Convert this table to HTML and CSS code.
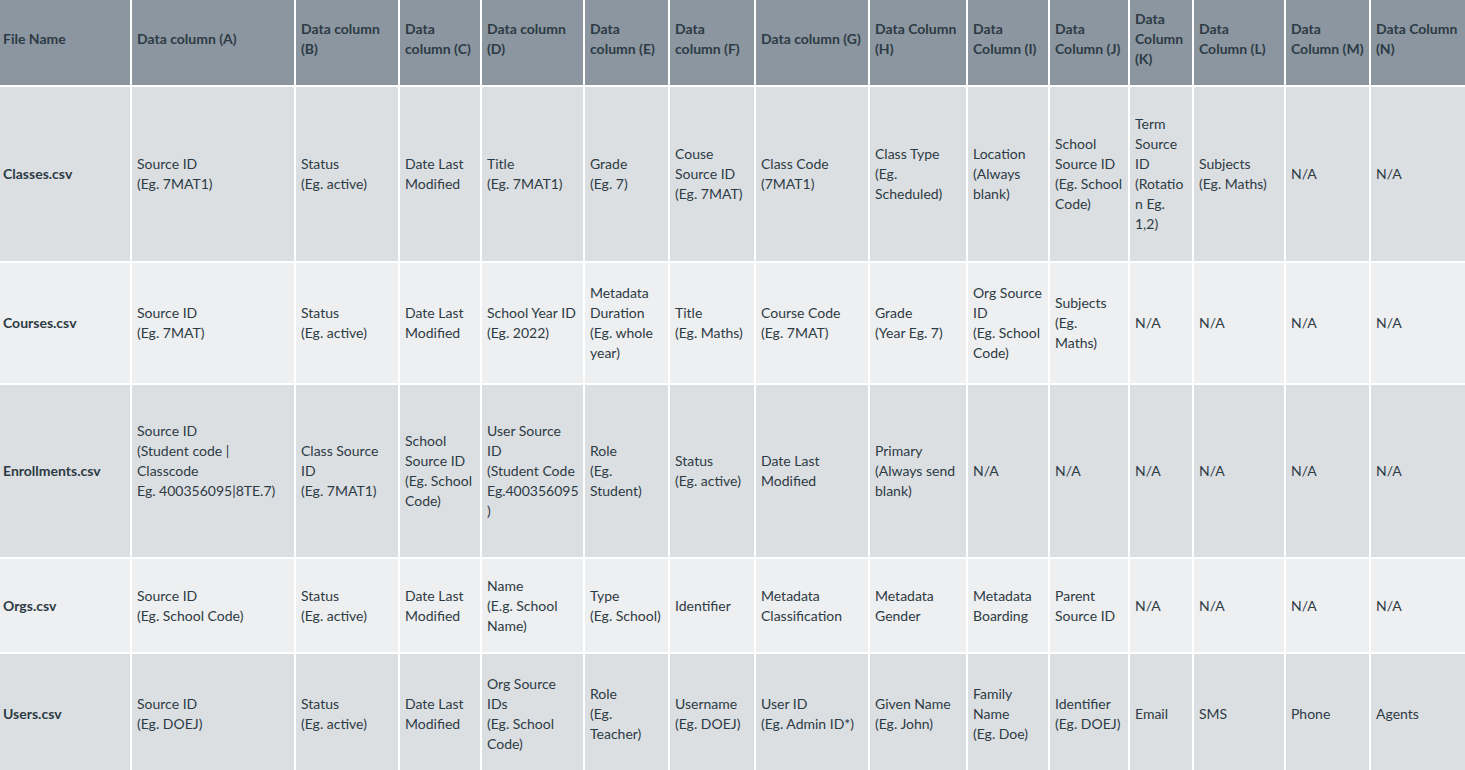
FILE: index.html
```html
<!DOCTYPE html>
<html lang="en">
<head>
<meta charset="utf-8">
<title>Roster CSV columns</title>
<link rel="stylesheet" href="styles.css">
</head>
<body>
<table class="csv-table">
  <colgroup>
    <col class="c-file"><col class="c-a"><col class="c-b"><col class="c-c"><col class="c-d"><col class="c-e"><col class="c-f"><col class="c-g"><col class="c-h"><col class="c-i"><col class="c-j"><col class="c-k"><col class="c-l"><col class="c-m"><col class="c-n">
  </colgroup>
  <thead>
    <tr class="row-head">
      <th>File Name</th>
      <th>Data column (A)</th>
      <th>Data column (B)</th>
      <th>Data column (C)</th>
      <th>Data column (D)</th>
      <th>Data column (E)</th>
      <th>Data column (F)</th>
      <th>Data column (G)</th>
      <th>Data Column (H)</th>
      <th>Data Column (I)</th>
      <th>Data Column (J)</th>
      <th>Data Column (K)</th>
      <th>Data Column (L)</th>
      <th>Data Column (M)</th>
      <th>Data Column (N)</th>
    </tr>
  </thead>
  <tbody>
    <tr class="row-odd row-classes">
      <th scope="row">Classes.csv</th>
      <td>Source ID<br>(Eg. 7MAT1)</td>
      <td>Status<br>(Eg. active)</td>
      <td>Date Last Modified</td>
      <td>Title<br>(Eg. 7MAT1)</td>
      <td>Grade<br>(Eg. 7)</td>
      <td>Couse Source ID<br>(Eg. 7MAT)</td>
      <td>Class Code<br>(7MAT1)</td>
      <td>Class Type<br>(Eg. Scheduled)</td>
      <td>Location<br>(Always blank)</td>
      <td>School Source ID<br>(Eg. School Code)</td>
      <td>Term Source ID<br>(Rotation Eg. 1,2)</td>
      <td>Subjects<br>(Eg. Maths)</td>
      <td>N/A</td>
      <td>N/A</td>
    </tr>
    <tr class="row-even row-courses">
      <th scope="row">Courses.csv</th>
      <td>Source ID<br>(Eg. 7MAT)</td>
      <td>Status<br>(Eg. active)</td>
      <td>Date Last Modified</td>
      <td>School Year ID<br>(Eg. 2022)</td>
      <td>Metadata Duration<br>(Eg. whole year)</td>
      <td>Title<br>(Eg. Maths)</td>
      <td>Course Code<br>(Eg. 7MAT)</td>
      <td>Grade<br>(Year Eg. 7)</td>
      <td>Org Source ID<br>(Eg. School Code)</td>
      <td>Subjects<br>(Eg.<br>Maths)</td>
      <td>N/A</td>
      <td>N/A</td>
      <td>N/A</td>
      <td>N/A</td>
    </tr>
    <tr class="row-odd row-enrol">
      <th scope="row">Enrollments.csv</th>
      <td>Source ID<br>(Student code | Classcode<br>Eg. 400356095|8TE.7)<br><br></td>
      <td>Class Source ID<br>(Eg. 7MAT1)</td>
      <td>School Source ID<br>(Eg. School Code)</td>
      <td>User Source<br>ID<br>(Student Code Eg.400356095)</td>
      <td>Role<br>(Eg. Student)</td>
      <td>Status<br>(Eg. active)</td>
      <td>Date Last Modified</td>
      <td>Primary<br>(Always send blank)</td>
      <td>N/A</td>
      <td>N/A</td>
      <td>N/A</td>
      <td>N/A</td>
      <td>N/A</td>
      <td>N/A</td>
    </tr>
    <tr class="row-even row-orgs">
      <th scope="row">Orgs.csv</th>
      <td>Source ID<br>(Eg. School Code)</td>
      <td>Status<br>(Eg. active)</td>
      <td>Date Last Modified</td>
      <td>Name<br>(E.g. School Name)</td>
      <td>Type<br>(Eg. School)</td>
      <td>Identifier</td>
      <td>Metadata Classification</td>
      <td>Metadata Gender</td>
      <td>Metadata Boarding</td>
      <td>Parent Source ID</td>
      <td>N/A</td>
      <td>N/A</td>
      <td>N/A</td>
      <td>N/A</td>
    </tr>
    <tr class="row-odd row-users">
      <th scope="row">Users.csv</th>
      <td>Source ID<br>(Eg. DOEJ)</td>
      <td>Status<br>(Eg. active)</td>
      <td>Date Last Modified</td>
      <td>Org Source IDs<br>(Eg. School Code)</td>
      <td>Role<br>(Eg. Teacher)</td>
      <td>Username<br>(Eg. DOEJ)</td>
      <td>User ID<br>(Eg. Admin ID*)</td>
      <td>Given Name<br>(Eg. John)</td>
      <td>Family Name<br>(Eg. Doe)</td>
      <td>Identifier<br>(Eg. DOEJ)</td>
      <td>Email</td>
      <td>SMS</td>
      <td>Phone</td>
      <td>Agents</td>
    </tr>
  </tbody>
</table>
</body>
</html>
```

FILE: styles.css
```css
html, body {
  margin: 0;
  padding: 0;
  background: #ffffff;
}

body {
  font-family: Lato, "Liberation Sans", sans-serif;
  font-size: 14px;
  line-height: 20px;
  color: #2d3b45;
  overflow: hidden;
}

.csv-table {
  width: 1465px;
  table-layout: fixed;
  border-collapse: collapse;
  border-style: hidden;
}

.csv-table th,
.csv-table td {
  border: 2px solid #ffffff;
  padding: 0 4px 0 5px;
  vertical-align: middle;
  text-align: left;
  overflow-wrap: break-word;
  word-wrap: break-word;
}

.csv-table th {
  font-weight: 700;
}

.csv-table tbody td {
  font-weight: 400;
}

.csv-table th:first-child {
  padding-left: 3px;
}

.row-head th {
  background: #8b96a0;
  padding-bottom: 8px;
}

.row-odd th,
.row-odd td {
  background: #dcdfe2;
}

.row-even th,
.row-even td {
  background: #eeeff0;
}

.row-head { height: 86px; }
.row-classes { height: 176px; }
.row-courses { height: 122px; }
.row-enrol { height: 174px; }
.row-orgs { height: 95px; }
.row-users { height: 120px; }

.c-file { width: 131px; }
.c-a { width: 164px; }
.c-b { width: 104px; }
.c-c { width: 82px; }
.c-d { width: 103px; }
.c-e { width: 85px; }
.c-f { width: 86px; }
.c-g { width: 114px; }
.c-h { width: 98px; }
.c-i { width: 82px; }
.c-j { width: 80px; }
.c-k { width: 64px; }
.c-l { width: 92px; }
.c-m { width: 85px; }
.c-n { width: 95px; }
```
